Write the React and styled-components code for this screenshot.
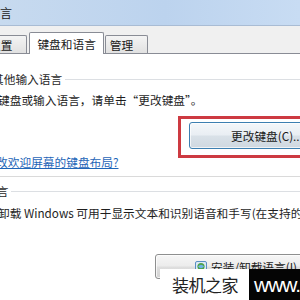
import React from 'react'
import styled, { createGlobalStyle } from 'styled-components'

const GlobalStyle = createGlobalStyle`
  html, body {
    margin: 0;
    padding: 0;
    background: #fff;
  }
  body {
    width: 300px;
    height: 300px;
    overflow: hidden;
    font-family: "Microsoft YaHei", "Noto Sans CJK SC", "Noto Sans", sans-serif;
    font-size: 11.7px;
    color: #1e1e1e;
  }
`

const Window = styled.div`
  position: relative;
  width: 300px;
  height: 300px;
  overflow: hidden;
  display: flex;
  flex-direction: column;
  background: #fff;
`

const TitleBar = styled.div`
  height: 25px;
  flex-shrink: 0;
  display: flex;
  align-items: center;
  background: linear-gradient(to right, #c7daef 0%, #bcd3ee 55%, #c8dcf3 100%);
  border-bottom: 1px solid #a9bcd4;
  white-space: nowrap;
`

const Title = styled.span`
  margin-left: -48px;
  font-size: 12px;
  color: #1b1b1b;
`

const TabStrip = styled.div`
  height: 27px;
  flex-shrink: 0;
  display: flex;
  align-items: flex-end;
  background: #f0f0f0;
  border-bottom: 1px solid #898c95;
  white-space: nowrap;
`

const Tab = styled.div`
  position: relative;
  box-sizing: border-box;
  height: ${p => (p.$active ? 22 : 18)}px;
  margin-left: ${p => p.$offset}px;
  margin-bottom: ${p => (p.$active ? -1 : 0)}px;
  padding: ${p => (p.$active ? '0 7px' : '0 14px 0 4px')};
  display: flex;
  align-items: center;
  border: 1px solid #898c95;
  border-bottom: none;
  border-radius: 2px 2px 0 0;
  background: ${p => (p.$active ? '#fff' : 'linear-gradient(#f4f4f4, #e1e1e1)')};
  color: #1a1a1a;
  z-index: ${p => (p.$active ? 1 : 0)};
`

const Panel = styled.div`
  flex: 1;
  display: flex;
  flex-direction: column;
  white-space: nowrap;
  line-height: 16px;
`

const GroupHeader = styled.div`
  display: flex;
  align-items: center;
  gap: 3px;
  margin-top: ${p => p.$top}px;
  color: #2a2a2a;

  &::after {
    content: '';
    flex: 1;
    height: 1px;
    background: #dcdfe3;
  }
`

const Shifted = styled.span`
  margin-left: ${p => p.$shift}px;
`

const Text = styled.div`
  margin-top: ${p => p.$top}px;
  margin-left: ${p => p.$shift}px;
  color: #1e1e1e;
`

const ButtonRow = styled.div`
  display: flex;
  margin-top: ${p => p.$top}px;
  padding-left: ${p => p.$indent}px;
`

const Button = styled.div`
  position: relative;
  box-sizing: border-box;
  flex-shrink: 0;
  width: 180px;
  height: ${p => p.$h}px;
  padding-left: ${p => p.$pad}px;
  display: flex;
  align-items: center;
  gap: 3px;
  border: 1px solid ${p => (p.$focus ? '#3c7fb1' : '#8e8f8f')};
  border-radius: 3px;
  background: ${p =>
    p.$focus
      ? 'linear-gradient(#f4f7fa 0%, #e9eef3 48%, #d9e1e8 52%, #cfd8e0 100%)'
      : 'linear-gradient(#f6f6f6 0%, #ececec 48%, #dedede 52%, #d3d3d3 100%)'};
  box-shadow: inset 0 0 0 1px rgba(255, 255, 255, 0.7);
  color: #1a1a1a;

  ${p =>
    p.$marked &&
    `&::after {
      content: '';
      position: absolute;
      top: -7px;
      left: -12px;
      right: -20px;
      bottom: -10px;
      border: 3px solid #cd3a41;
    }`}
`

const Link = styled.div`
  margin-top: ${p => p.$top}px;
  margin-left: ${p => p.$shift}px;
  color: #1f66b8;
  text-decoration: underline;
`

const Separator = styled.div`
  margin-top: ${p => p.$top}px;
  height: 1px;
  background: #dadada;
`

const Watermark = styled.div`
  position: absolute;
  left: 160px;
  right: 0;
  bottom: 0;
  height: 31px;
  display: flex;
  z-index: 5;
`

const MarkName = styled.div`
  width: 89px;
  padding-left: 12px;
  box-sizing: border-box;
  display: flex;
  align-items: center;
  background: #fff;
  font-size: 17px;
  color: #222;
  letter-spacing: -0.5px;
`

const MarkUrl = styled.div`
  flex: 1;
  display: flex;
  align-items: center;
  padding-left: 5px;
  background: #050505;
  color: #fff;
  font-family: "Liberation Sans", Arial, sans-serif;
  font-size: 21px;
  letter-spacing: -1px;
  overflow: hidden;
  white-space: nowrap;
`

const LangIcon = () => (
  <svg width="13" height="13" viewBox="0 0 13 13">
    <rect x="0.5" y="1.5" width="11" height="10" rx="1.5" fill="#dbe9f6" stroke="#5b8fc4" />
    <circle cx="6" cy="6.5" r="3.6" fill="#4ea24a" />
    <path d="M3 6.5 Q6 3 9 6.5 Q6 10 3 6.5" fill="#6fb4e8" />
  </svg>
)

export default function App() {
  return (
    <Window>
      <GlobalStyle />
      <TitleBar>
        <Title>区域和语言</Title>
      </TitleBar>
      <TabStrip>
        <Tab $offset={-16}>位置</Tab>
        <Tab $active $offset={2}>键盘和语言</Tab>
        <Tab $offset={1}>管理</Tab>
      </TabStrip>
      <Panel>
        <GroupHeader $top={17}>
          <Shifted $shift={-8}>其他输入语言</Shifted>
        </GroupHeader>
        <Text $top={5} $shift={-2}>键盘或输入语言，请单击“更改键盘”。</Text>
        <ButtonRow $top={14} $indent={189}>
          <Button $focus $marked $h={27} $pad={41}>更改键盘(C)...</Button>
        </ButtonRow>
        <Link $top={5} $shift={-39}>如何更改欢迎屏幕的键盘布局?</Link>
        <Separator $top={6} />
        <GroupHeader $top={6}>
          <Shifted $shift={-15}>语言</Shifted>
        </GroupHeader>
        <Text $top={6} $shift={-2}>卸载 Windows 可用于显示文本和识别语音和手写(在支持的情况下)的其他语言。</Text>
        <ButtonRow $top={33} $indent={155}>
          <Button $h={25} $pad={39}>
            <LangIcon />
            安装/卸载语言(I)...
          </Button>
        </ButtonRow>
      </Panel>
      <Watermark>
        <MarkName>装机之家</MarkName>
        <MarkUrl>www.lzhijia.com</MarkUrl>
      </Watermark>
    </Window>
  )
}
